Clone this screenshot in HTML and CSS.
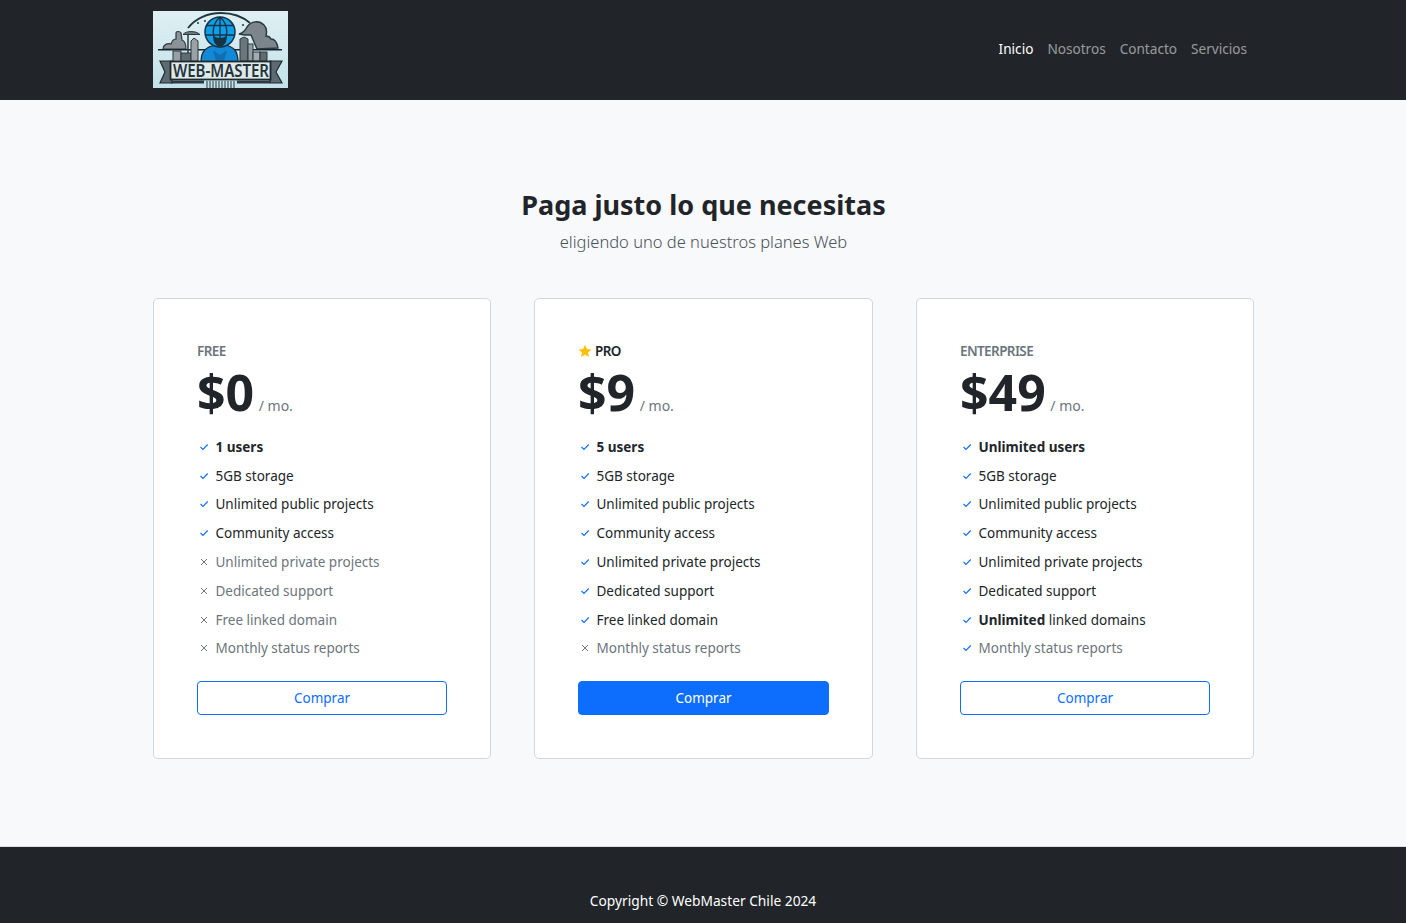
FILE: index.html
```html
<!DOCTYPE html>
<html lang="es">
<head>
<meta charset="utf-8">
<title>WebMaster Chile</title>
<link rel="stylesheet" href="styles.css">
</head>
<body>
<svg class="sprite" width="0" height="0" aria-hidden="true">
  <symbol id="chk" viewBox="0 0 14 14"><path d="M3.500 7 6 9.500 10.700 4.500" fill="none" stroke="currentColor" stroke-width="1.100"/></symbol>
  <symbol id="x" viewBox="0 0 14 14"><path d="M4 4l6 6M10 4l-6 6" fill="none" stroke="currentColor" stroke-width="1"/></symbol>
</svg>
<header class="topbar">
  <div class="wrap topbar-in">
    <svg class="logo" viewBox="0 0 135 77" role="img" aria-label="Web-Master">
      <defs>
        <linearGradient id="bg" x1="0" y1="0" x2="0" y2="1"><stop offset="0" stop-color="#dff0f3"/><stop offset="1" stop-color="#c3e2ea"/></linearGradient>
      </defs>
      <rect width="135" height="77" fill="url(#bg)"/>
      <path d="M35 17C42 8 54 2 68 2c12 0 22 4 29 10" fill="none" stroke="#22343e" stroke-width="1.800"/>
      <circle cx="45" cy="12" r="1" fill="#22343e"/><circle cx="52" cy="10" r="1" fill="#22343e"/><circle cx="90" cy="14" r="1" fill="#22343e"/>
      <path d="M10 38c0-4 4-6 8-5 1-3 3-5 5-5v-6c0-2 4-2 5 0l1 7c3 1 4 5 4 9z" fill="#8b9399" stroke="#2c383f" stroke-width="1.200"/>
      <path d="M86 23c4-1 6-3 8-7 4-6 12-7 17-2 3 3 3 7 2 11 3 0 4 1 5 3 3 0 6 3 7 9l-21 1-6-14H92z" fill="#7d858c" stroke="#2c383f" stroke-width="1.400"/>
      <path d="M5 38.700h124" stroke="#17252c" stroke-width="1.500"/>
      <rect x="20" y="40" width="8" height="11" fill="#98a0a5" stroke="#2c383f"/>
      <rect x="28" y="42" width="10" height="9" fill="#5f6a71" stroke="#2c383f"/>
      <path d="M30 23.500c3-4 13-4 17 0z" fill="#6e777e" stroke="#2c383f"/>
      <path d="M35 24v18" stroke="#2c383f" stroke-width="1.500"/>
      <path d="M38 50V30l3-3 4 3v20z" fill="#9aa2a7" stroke="#2c383f"/>
      <path d="M87 50V28l4-2 4 2v22z" fill="#6b757c" stroke="#2c383f"/>
      <rect x="95" y="33" width="5" height="17" fill="#939ba1" stroke="#2c383f"/>
      <rect x="100" y="41" width="7" height="9" fill="#a4abb0" stroke="#2c383f"/>
      <rect x="107" y="41" width="7" height="9" fill="#5f6a71" stroke="#2c383f"/>
      <path d="M48 51c0-12 6-15 14-17h11c7 2 12 5 12 17z" fill="#1388d6" stroke="#1a2b36" stroke-width="1.200"/>
      <circle cx="67" cy="21" r="15" fill="#0f9ee8" stroke="#173447" stroke-width="1.500"/>
      <path d="M67 6v30M53 14.500h28M52 24h30M67 6c-9 8-9 22 0 30M67 6c9 8 9 22 0 30" fill="none" stroke="#173447" stroke-width="1.400"/>
      <path d="M60 25q7 4 14 0l-1 6q-3 5-6 5t-6-5z" fill="#1a3342"/>
      <path d="M60 39l7 5 7-5-3 11h-8z" fill="#0e6fb3"/>
      <path d="M7 50h12v22H7l5-11z" fill="#5e6a71" stroke="#1d2a31" stroke-width="1.200"/>
      <path d="M129 50h-12v22h12l-6-11z" fill="#5e6a71" stroke="#1d2a31" stroke-width="1.200"/>
      <rect x="17.500" y="50.500" width="100" height="18" fill="#dfe9ea" stroke="#1d2a31" stroke-width="1.800"/>
      <text class="logo-text" x="20" y="66" textLength="96" lengthAdjust="spacingAndGlyphs">WEB-MASTER</text>
      <path d="M18 71h33M84 71h33" stroke="#2c383f" stroke-width="3"/>
      <path d="M54 70v7M57 70v7M60 70v7M63 70v7M66 70v7M69 70v7M72 70v7M75 70v7M78 70v7M81 70v7" stroke="#46545b" stroke-width="1.200"/>
    </svg>
    <nav class="nav">
      <a class="nav-link active" href="#">Inicio</a>
      <a class="nav-link" href="#">Nosotros</a>
      <a class="nav-link" href="#">Contacto</a>
      <a class="nav-link" href="#">Servicios</a>
    </nav>
  </div>
</header>
<main class="main">
  <div class="wrap">
    <div class="intro">
      <h1>Paga justo lo que necesitas</h1>
      <p>eligiendo uno de nuestros planes Web</p>
    </div>
    <div class="plans">
      <section class="card">
        <div class="plan-name">FREE</div>
        <div class="price"><span class="amount">$0</span><span class="per">/ mo.</span></div>
        <ul class="features">
          <li><svg class="ic yes"><use href="#chk"/></svg><span><b>1 users</b></span></li>
          <li><svg class="ic yes"><use href="#chk"/></svg><span>5GB storage</span></li>
          <li><svg class="ic yes"><use href="#chk"/></svg><span>Unlimited public projects</span></li>
          <li><svg class="ic yes"><use href="#chk"/></svg><span>Community access</span></li>
          <li class="off"><svg class="ic"><use href="#x"/></svg><span>Unlimited private projects</span></li>
          <li class="off"><svg class="ic"><use href="#x"/></svg><span>Dedicated support</span></li>
          <li class="off"><svg class="ic"><use href="#x"/></svg><span>Free linked domain</span></li>
          <li class="off"><svg class="ic"><use href="#x"/></svg><span>Monthly status reports</span></li>
        </ul>
        <a class="btn" href="#">Comprar</a>
      </section>
      <section class="card">
        <div class="plan-name featured"><svg class="star" viewBox="0 0 16 16"><path d="M8 .8l2.200 4.800 5.200.6-3.900 3.500 1.100 5.200L8 12.300l-4.600 2.600 1.100-5.200L.6 6.200l5.200-.6z" fill="#ffc107"/></svg>PRO</div>
        <div class="price"><span class="amount">$9</span><span class="per">/ mo.</span></div>
        <ul class="features">
          <li><svg class="ic yes"><use href="#chk"/></svg><span><b>5 users</b></span></li>
          <li><svg class="ic yes"><use href="#chk"/></svg><span>5GB storage</span></li>
          <li><svg class="ic yes"><use href="#chk"/></svg><span>Unlimited public projects</span></li>
          <li><svg class="ic yes"><use href="#chk"/></svg><span>Community access</span></li>
          <li><svg class="ic yes"><use href="#chk"/></svg><span>Unlimited private projects</span></li>
          <li><svg class="ic yes"><use href="#chk"/></svg><span>Dedicated support</span></li>
          <li><svg class="ic yes"><use href="#chk"/></svg><span>Free linked domain</span></li>
          <li class="off"><svg class="ic"><use href="#x"/></svg><span>Monthly status reports</span></li>
        </ul>
        <a class="btn primary" href="#">Comprar</a>
      </section>
      <section class="card">
        <div class="plan-name">ENTERPRISE</div>
        <div class="price"><span class="amount">$49</span><span class="per">/ mo.</span></div>
        <ul class="features">
          <li><svg class="ic yes"><use href="#chk"/></svg><span><b>Unlimited users</b></span></li>
          <li><svg class="ic yes"><use href="#chk"/></svg><span>5GB storage</span></li>
          <li><svg class="ic yes"><use href="#chk"/></svg><span>Unlimited public projects</span></li>
          <li><svg class="ic yes"><use href="#chk"/></svg><span>Community access</span></li>
          <li><svg class="ic yes"><use href="#chk"/></svg><span>Unlimited private projects</span></li>
          <li><svg class="ic yes"><use href="#chk"/></svg><span>Dedicated support</span></li>
          <li><svg class="ic yes"><use href="#chk"/></svg><span><b>Unlimited</b> linked domains</span></li>
          <li class="muted"><svg class="ic yes"><use href="#chk"/></svg><span>Monthly status reports</span></li>
        </ul>
        <a class="btn" href="#">Comprar</a>
      </section>
    </div>
  </div>
</main>
<footer class="footer">Copyright © WebMaster Chile 2024</footer>
</body>
</html>
```
FILE: styles.css
```css
* { box-sizing: border-box; }
html, body { height: 100%; }
body {
  margin: 0;
  display: flex;
  flex-direction: column;
  height: 923px;
  overflow: hidden;
  font-family: "Noto Sans", "Open Sans", sans-serif;
  font-size: 13.500px;
  color: #212529;
  background: #f8f9fa;
}
.sprite { position: absolute; }
.wrap { width: 1101px; margin-left: 153px; }
.topbar { height: 100px; background: #212529; flex: none; }
.topbar-in { height: 100px; display: flex; align-items: center; justify-content: space-between; padding-bottom: 1px; }
.logo { width: 135px; height: 77px; display: block; }
.logo-text { font-family: "Noto Sans", sans-serif; font-weight: 600; font-size: 17.500px; fill: #25343b; }
.nav { display: flex; margin-bottom: 2px; }
.nav-link { padding: 0 7px; color: rgba(255, 255, 255, .55); text-decoration: none; font-size: 13.600px; line-height: 20px; }
.nav-link.active { color: #fff; }
.main { flex: 1; border-bottom: 1px solid #dee2e6; }
.intro { text-align: center; padding-top: 85px; }
.intro h1 { margin: 0; font-size: 27px; line-height: 40px; font-weight: 700; color: #212529; }
.intro p { margin: 5px 0 0; font-size: 16.500px; line-height: 24px; font-weight: 300; color: #495057; }
.plans { display: grid; grid-template-columns: 338px 339px 338px; gap: 43px; margin-top: 44px; }
.card {
  height: 461px;
  padding: 44px 43px 43px;
  background: #fff;
  border: 1px solid #d3d6da;
  border-radius: 5px;
  display: flex;
  flex-direction: column;
}
.plan-name { font-size: 13.500px; letter-spacing: -.6px; line-height: 16px; font-weight: 600; color: #6c757d; display: flex; align-items: center; }
.plan-name.featured { color: #212529; }
.star { width: 14px; height: 14px; margin-right: 3px; }
.price { display: flex; align-items: baseline; margin-top: 7px; }
.amount { font-size: 50px; line-height: 52px; font-weight: 700; color: #212529; }
.per { font-size: 14px; color: #6c757d; margin-left: 4.500px; }
.features { list-style: none; margin: 14.400px 0 0; padding: 0; display: flex; flex-direction: column; }
.features li { height: 28.800px; display: flex; align-items: center; }
.features li.off, .features li.muted { color: #6c757d; }
.ic { width: 14px; height: 14px; flex: none; margin-right: 4.500px; color: #6c757d; }
.ic.yes { color: #0d6efd; }
.btn {
  height: 34px;
  margin-top: 18.200px;
  display: flex;
  align-items: center;
  justify-content: center;
  border: 1px solid #0d6efd;
  border-radius: 4px;
  color: #0d6efd;
  background: #fff;
  text-decoration: none;
}
.btn.primary { background: #0d6efd; color: #fff; }
.footer {
  height: 76px;
  flex: none;
  background: #212529;
  color: #fff;
  text-align: center;
  font-size: 13.750px;
  padding-top: 44px;
  line-height: 20px;
}
```
